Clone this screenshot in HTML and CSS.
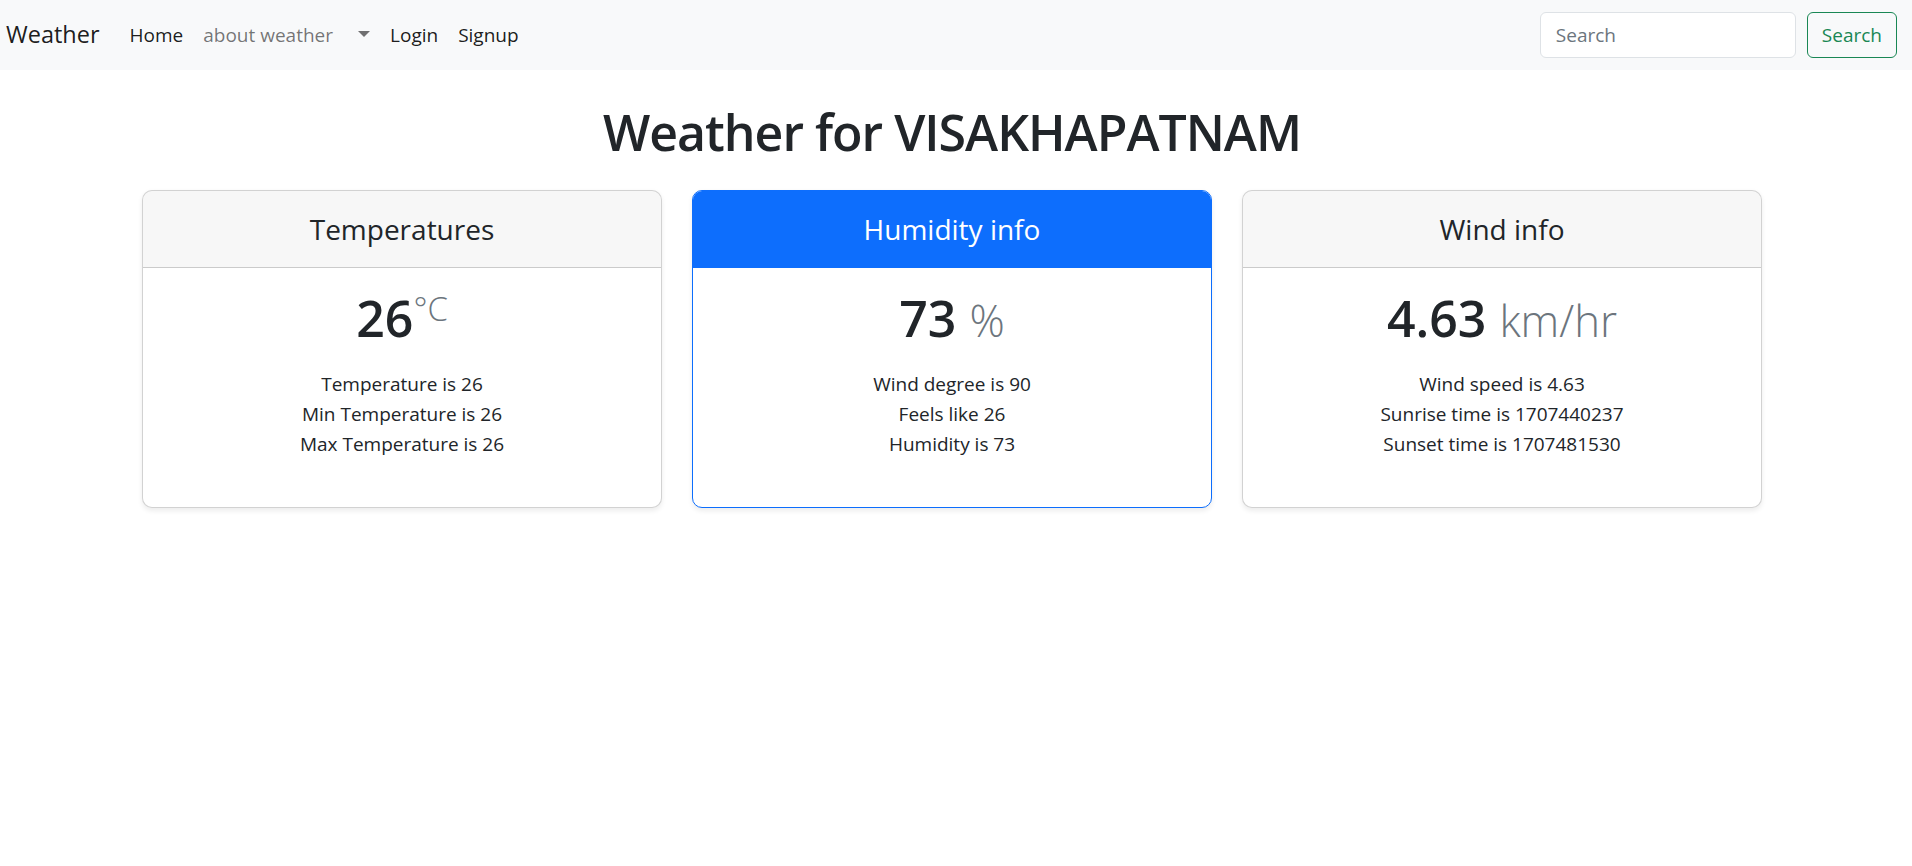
FILE: index.html
```html
<!DOCTYPE html>
<html lang="en">
<head>
<meta charset="utf-8">
<title>Weather</title>
<link rel="stylesheet" href="styles.css">
</head>
<body>
<nav class="navbar">
  <a class="brand" href="#">Weather</a>
  <ul class="nav">
    <li><a class="nav-link active" href="#">Home</a></li>
    <li><a class="nav-link muted" href="#">about weather</a></li>
    <li><a class="nav-link toggle" href="#"><span class="caret"></span></a></li>
    <li><a class="nav-link active" href="#">Login</a></li>
    <li><a class="nav-link active" href="#">Signup</a></li>
  </ul>
  <form class="search">
    <input class="search-input" type="search" placeholder="Search">
    <button class="search-btn" type="button">Search</button>
  </form>
</nav>

<main class="container">
  <h1 class="page-title">Weather for VISAKHAPATNAM</h1>
  <div class="cards">
    <div class="card">
      <div class="card-header"><h4>Temperatures</h4></div>
      <div class="card-body">
        <h1 class="card-title">26<small class="unit"><sup>°C</sup></small></h1>
        <ul class="facts">
          <li>Temperature is 26</li>
          <li>Min Temperature is 26</li>
          <li>Max Temperature is 26</li>
        </ul>
      </div>
    </div>
    <div class="card card-primary">
      <div class="card-header"><h4>Humidity info</h4></div>
      <div class="card-body">
        <h1 class="card-title">73 <small class="unit">%</small></h1>
        <ul class="facts">
          <li>Wind degree is 90</li>
          <li>Feels like 26</li>
          <li>Humidity is 73</li>
        </ul>
      </div>
    </div>
    <div class="card">
      <div class="card-header"><h4>Wind info</h4></div>
      <div class="card-body">
        <h1 class="card-title">4.63 <small class="unit">km/hr</small></h1>
        <ul class="facts">
          <li>Wind speed is 4.63</li>
          <li>Sunrise time is 1707440237</li>
          <li>Sunset time is 1707481530</li>
        </ul>
      </div>
    </div>
  </div>
</main>
</body>
</html>
```

FILE: styles.css
```css
* { box-sizing: border-box; }

body {
  margin: 0;
  font-family: "Open Sans", "Noto Sans", sans-serif;
  font-size: 19px;
  line-height: 30px;
  color: #212529;
  background: #fff;
}

a { text-decoration: none; }

.navbar {
  display: flex;
  align-items: center;
  height: 70px;
  padding: 0 15px 0 6px;
  background: #f8f9fa;
}

.brand {
  font-size: 23.5px;
  line-height: 37.5px;
  color: rgba(0, 0, 0, 0.9);
  margin-right: 20px;
}

.nav {
  display: flex;
  list-style: none;
  margin: 0;
  padding: 0;
}

.nav-link {
  display: block;
  padding: 10px;
  color: rgba(0, 0, 0, 0.55);
}

.nav-link.active { color: rgba(0, 0, 0, 0.9); }

.caret {
  display: inline-block;
  margin-left: 5px;
  vertical-align: 5px;
  border-top: 6px solid rgba(0, 0, 0, 0.55);
  border-left: 6px solid transparent;
  border-right: 6px solid transparent;
}

.search {
  display: flex;
  gap: 11px;
  margin: 0 0 0 auto;
}

.search-input {
  width: 256px;
  height: 46px;
  padding: 0 15px;
  font: inherit;
  color: #212529;
  background: #fff;
  border: 1px solid #dee2e6;
  border-radius: 6px;
  outline: none;
}

.search-input::placeholder { color: #6c757d; }

.search-btn {
  height: 46px;
  padding: 0 14px;
  font: inherit;
  color: #198754;
  background: transparent;
  border: 1px solid #198754;
  border-radius: 6px;
}

.container {
  width: 1650px;
  margin-left: 127px;
  padding: 32px 15px 20px;
}

.page-title {
  margin: 0 0 28px;
  font-size: 50px;
  line-height: 60px;
  font-weight: 600;
  text-align: center;
  letter-spacing: -1px;
}

.cards {
  display: grid;
  grid-template-columns: repeat(3, 1fr);
  gap: 30px;
  text-align: center;
}

.card {
  border: 1px solid rgba(0, 0, 0, 0.175);
  border-radius: 10px;
  box-shadow: 0 2.5px 5px rgba(0, 0, 0, 0.075);
  overflow: hidden;
  background: #fff;
}

.card-header {
  padding: 20px;
  background: rgba(0, 0, 0, 0.03);
  border-bottom: 1px solid rgba(0, 0, 0, 0.175);
}

.card-header h4 {
  margin: 0;
  font-size: 28px;
  line-height: 36px;
  font-weight: 400;
}

.card-primary { border-color: #0d6efd; }

.card-primary .card-header {
  background: #0d6efd;
  border-bottom-color: #0d6efd;
  color: #fff;
}

.card-body { padding: 20px; }

.card-title {
  margin: 0 0 10px;
  font-size: 50px;
  line-height: 60px;
  font-weight: 600;
}

.unit {
  font-size: 0.875em;
  font-weight: 300;
  color: #6c757d;
}

.unit sup {
  position: relative;
  top: -0.5em;
  font-size: 0.75em;
  line-height: 0;
  vertical-align: baseline;
}

.facts {
  list-style: none;
  margin: 19px 0 28px;
  padding: 0;
}
```
